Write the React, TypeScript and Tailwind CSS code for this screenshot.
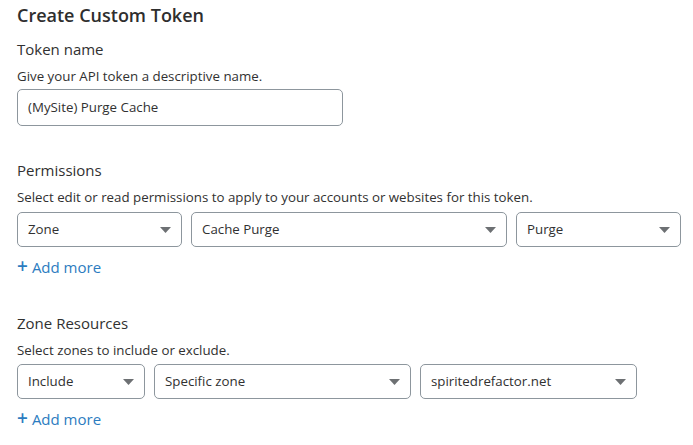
import React from "react";

const font = { fontFamily: '"Open Sans", "Noto Sans", Arial, sans-serif' };

function Caret() {
    return (
        <svg width="11" height="6" viewBox="0 0 11 6" className="shrink-0">
            <path d="M0 0 L11 0 L5.5 6 Z" fill="#6d7073" />
        </svg>
    );
}

function Select({ value, width }: { value: string; width: string }) {
    return (
        <div
            className={`${width} h-[35px] flex items-center justify-between pl-[10px] pr-[10px] border border-[#8d969d] rounded-[5px] bg-white`}
        >
            <span className="text-[13.3px] text-[#313131]">{value}</span>
            <Caret />
        </div>
    );
}

function AddMore() {
    return (
        <div className="flex items-center gap-[4px] h-[20px] text-[15px] text-[#2c7cc0] leading-none">
            <span className="text-[19px] font-semibold leading-none -mt-[2px]">+</span>
            <span>Add more</span>
        </div>
    );
}

export default function App() {
    return (
        <div className="w-[693px] h-[445px] bg-white pl-[17px] pt-[3px] text-[#313131]" style={font}>
            <h1 className="text-[18px] leading-[24px] font-semibold text-[#2e2e2e]">Create Custom Token</h1>

            <div className="mt-[12px] text-[15px] leading-[20px]">Token name</div>
            <div className="mt-[8px] text-[13.3px] leading-[18px]">Give your API token a descriptive name.</div>
            <div className="mt-[4px] w-[326px] h-[37px] flex items-center pl-[10px] border border-[#8d969d] rounded-[5px] text-[13.3px]">
                (MySite) Purge Cache
            </div>

            <div className="mt-[34px] text-[15px] leading-[20px]">Permissions</div>
            <div className="mt-[8px] text-[13.3px] leading-[18px]">
                Select edit or read permissions to apply to your accounts or websites for this token.
            </div>
            <div className="mt-[6px] flex gap-[9px]">
                <Select value="Zone" width="w-[165px]" />
                <Select value="Cache Purge" width="w-[316px]" />
                <Select value="Purge" width="w-[165px]" />
            </div>
            <div className="mt-[10px]">
                <AddMore />
            </div>

            <div className="mt-[36px] text-[15px] leading-[20px]">Zone Resources</div>
            <div className="mt-[8px] text-[13.3px] leading-[18px]">Select zones to include or exclude.</div>
            <div className="mt-[5px] flex gap-[9px]">
                <Select value="Include" width="w-[128px]" />
                <Select value="Specific zone" width="w-[257px]" />
                <Select value="spiritedrefactor.net" width="w-[217px]" />
            </div>
            <div className="mt-[10px]">
                <AddMore />
            </div>
        </div>
    );
}
